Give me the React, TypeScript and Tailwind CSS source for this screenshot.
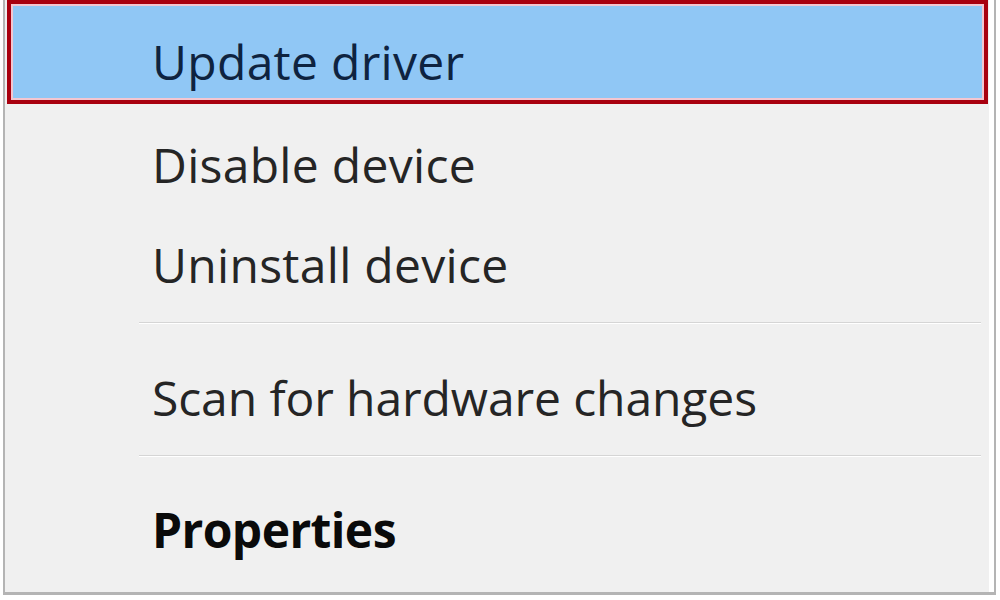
import React from 'react';

type MenuItem = {
  label: string;
  bold?: boolean;
  tracking?: string;
};

function Separator({ top }: { top: string }) {
  return <div className={`${top} ml-[134px] mr-[8px] h-[2px] border-t border-[#d5d5d5] border-b border-b-white`} />;
}

function Row({ item, className }: { item: MenuItem; className: string }) {
  return (
    <div className={`flex items-center pl-[147px] h-[100px] ${className}`}>
      <span
        className={`text-[48px] leading-none ${
          item.bold ? 'font-bold text-[#0a0a0a] tracking-[-0.6px]' : `text-[#252525] ${item.tracking ?? 'tracking-[0.3px]'}`
        }`}
      >
        {item.label}
      </span>
    </div>
  );
}

export default function App() {
  return (
    <div className="w-[1000px] h-[600px] bg-white overflow-hidden" style={{ fontFamily: '"Open Sans", "Noto Sans", sans-serif' }}>
      <div className="ml-[3px] w-[993px] h-[595px] bg-[#f0f0f0] border-l-2 border-r-2 border-b-[3px] border-[#b4b4b4] flex flex-col">
        <div className="flex flex-1 flex-col border-r-[5px] border-white">
          {/* Highlighted item */}
          <div className="ml-[2px] mr-[1px] h-[104px] border-[4px] border-[#a8000f] bg-[#f4c6d0] p-[2px]">
            <div className="h-full bg-[#90c7f5] flex items-center pl-[139px] pt-[20px]">
              <span className="text-[48px] leading-none tracking-[0.3px] text-[#0e2340]">Update driver</span>
            </div>
          </div>

          <Row item={{ label: 'Disable device' }} className="mt-[11px]" />
          <Row item={{ label: 'Uninstall device' }} className="" />
          <Separator top="mt-[7px]" />
          <Row item={{ label: 'Scan for hardware changes', tracking: 'tracking-[-0.1px]' }} className="mt-[24px]" />
          <Separator top="mt-[7px]" />
          <Row item={{ label: 'Properties', bold: true }} className="mt-[23px]" />
        </div>
      </div>
    </div>
  );
}
